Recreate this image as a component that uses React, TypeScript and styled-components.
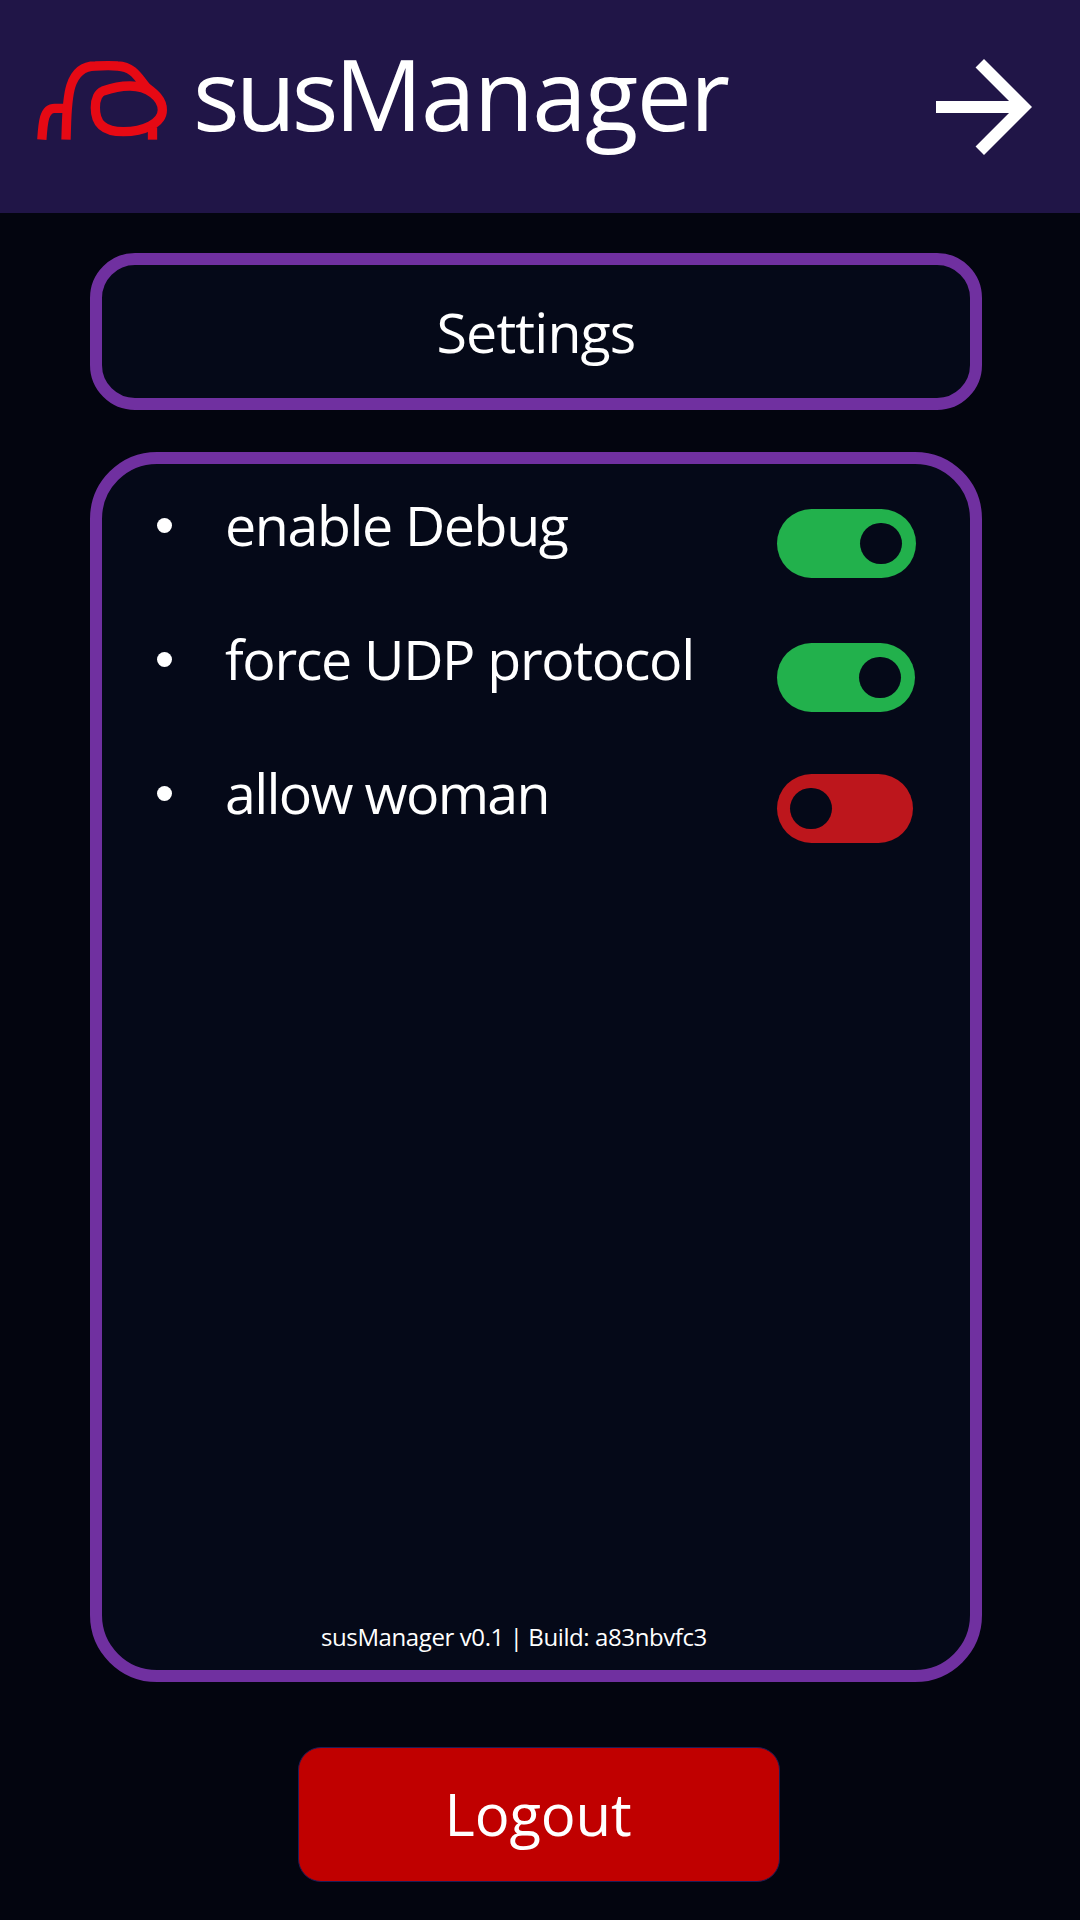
import React, { useState } from "react";
import styled, { createGlobalStyle } from "styled-components";

const GlobalStyle = createGlobalStyle`
  *, *::before, *::after { box-sizing: border-box; }
  body {
    margin: 0;
    background: #03050f;
    color: #fff;
    font-family: "Open Sans", "Noto Sans", sans-serif;
  }
  button { font: inherit; color: inherit; cursor: pointer; }
`;

const Screen = styled.div`
  width: 1080px;
  height: 1920px;
  display: flex;
  flex-direction: column;
  background: #03050f;
  overflow: hidden;
`;

const Header = styled.header`
  height: 213px;
  flex: none;
  display: flex;
  align-items: flex-start;
  padding: 40px 24px 0 20px;
  background: #201547;
`;

const Logo = styled.svg`
  width: 173px;
  height: 120px;
  flex: none;
`;

const Title = styled.h1`
  margin: 3px auto 0 0;
  font-size: 98px;
  line-height: 100px;
  font-weight: 400;
  letter-spacing: -1.65px;
  white-space: nowrap;
`;

const TitlePrefix = styled.span`
  letter-spacing: -4px;
`;

const NextButton = styled.button`
  width: 144px;
  height: 144px;
  margin-top: -5.5px;
  padding: 0;
  border: 0;
  background: none;

  svg {
    display: block;
    width: 144px;
    height: 144px;
    fill: #fff;
  }
`;

const Main = styled.main`
  flex: 1;
  display: flex;
  flex-direction: column;
  padding: 40px 0 0 90px;
`;

const Card = styled.section`
  width: 892px;
  border: 12px solid #7030a0;
  background: #050918;
`;

const HeadingCard = styled(Card)`
  height: 157px;
  border-radius: 45px;
  display: flex;
  align-items: center;
  justify-content: center;
`;

const Heading = styled.h2`
  margin: 0;
  font-size: 55.5px;
  line-height: 76px;
  font-weight: 400;
  letter-spacing: -0.86px;
`;

const SettingsCard = styled(Card)`
  height: 1230px;
  margin-top: 42px;
  padding: 22px 0 17px;
  border-radius: 67px;
  display: flex;
  flex-direction: column;
`;

const SettingList = styled.ul`
  margin: 0;
  padding: 0 0 0 55px;
  list-style: none;
`;

const SettingRow = styled.li`
  height: 134px;
  display: grid;
  grid-template-columns: 68px 552px auto;
  align-items: start;
  justify-content: start;
`;

const Bullet = styled.span`
  width: 15px;
  height: 15px;
  margin-top: 32px;
  border-radius: 50%;
  background: #fff;
`;

const Label = styled.span<{ $tracking: number }>`
  font-size: 55.5px;
  line-height: 77px;
  letter-spacing: ${(p) => p.$tracking}px;
  white-space: nowrap;
`;

const Toggle = styled.button<{ $on: boolean; $width: number; $top: number }>`
  width: ${(p) => p.$width}px;
  height: 69px;
  margin-top: ${(p) => p.$top}px;
  padding: 0 14px 0 13px;
  border: 0;
  border-radius: 35px;
  display: flex;
  align-items: center;
  justify-content: ${(p) => (p.$on ? "flex-end" : "flex-start")};
  background: ${(p) => (p.$on ? "#22b14c" : "#bd161c")};
`;

const Knob = styled.span`
  width: 41.5px;
  height: 41.5px;
  border-radius: 50%;
  background: #050918;
`;

const BuildInfo = styled.footer`
  margin-top: auto;
  padding-left: 219px;
  font-size: 24px;
  line-height: 32px;
  letter-spacing: -0.4px;
  white-space: nowrap;
`;

const LogoutButton = styled.button`
  width: 482px;
  height: 135px;
  margin: 65px 0 0 207.5px;
  padding: 0 1px 2px 0;
  border: 1px solid #1d1c58;
  border-radius: 23px;
  background: #c00000;

  && {
    font-size: 58px;
    line-height: 78px;
    letter-spacing: -0.16px;
  }
`;

interface Setting {
  label: string;
  enabled: boolean;
  tracking: number;
  width: number;
  top: number;
}

const initialSettings: Setting[] = [
  { label: "enable Debug", enabled: true, tracking: -1.38, width: 138.5, top: 23 },
  { label: "force UDP protocol", enabled: true, tracking: -1.32, width: 137.5, top: 23 },
  { label: "allow woman", enabled: false, tracking: -1.68, width: 136, top: 20 },
];

function App() {
  const [settings, setSettings] = useState(initialSettings);

  const flip = (index: number) =>
    setSettings((all) =>
      all.map((s, i) => (i === index ? { ...s, enabled: !s.enabled } : s))
    );

  return (
    <Screen>
      <GlobalStyle />
      <Header>
        <Logo viewBox="0 0 519 360" fill="none" stroke="#e60914" strokeWidth={28} aria-hidden>
          <path d="M65.5 299C69 246 72 205 104 205H134" />
          <path d="M138 299C142 200 134 78 226 78C247 77 270 76 293 78C340 80 355 113 379 142C400 158 427 177 427 210C427 250 370 275 310 275C250 275 226 250 226 203C226 176 236 158 249 153C272 145 300 138 328 138C384 137 427 173 427 210" />
          <path d="M397.5 299V262" />
        </Logo>
        <Title>
          <TitlePrefix>sus</TitlePrefix>Manager
        </Title>
        <NextButton aria-label="Next">
          <svg viewBox="0 0 24 24">
            <path d="M12 4l-1.41 1.41L16.17 11H4v2h12.17l-5.58 5.59L12 20l8-8z" />
          </svg>
        </NextButton>
      </Header>
      <Main>
        <HeadingCard>
          <Heading>Settings</Heading>
        </HeadingCard>
        <SettingsCard>
          <SettingList>
            {settings.map((s, i) => (
              <SettingRow key={s.label}>
                <Bullet />
                <Label $tracking={s.tracking}>{s.label}</Label>
                <Toggle
                  role="switch"
                  aria-checked={s.enabled}
                  aria-label={s.label}
                  $on={s.enabled}
                  $width={s.width}
                  $top={s.top}
                  onClick={() => flip(i)}
                >
                  <Knob />
                </Toggle>
              </SettingRow>
            ))}
          </SettingList>
          <BuildInfo>susManager v0.1 | Build: a83nbvfc3</BuildInfo>
        </SettingsCard>
        <LogoutButton>Logout</LogoutButton>
      </Main>
    </Screen>
  );
}

export default App;
